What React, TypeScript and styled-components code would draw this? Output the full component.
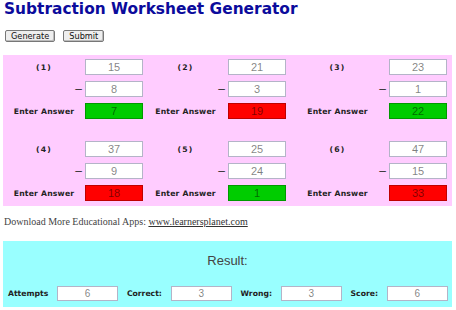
import styled, { createGlobalStyle } from 'styled-components'

const GlobalStyle = createGlobalStyle`
  body {
    margin: 0;
    background: #ffffff;
    font-family: "DejaVu Sans", Verdana, sans-serif;
  }
`

const Page = styled.div`
  width: 456px;
  height: 310px;
  overflow: hidden;
`

const Title = styled.h1`
  margin: 0;
  padding: 0 0 0 4px;
  font-family: "DejaVu Sans", Verdana, sans-serif;
  font-size: 15.4px;
  line-height: 19px;
  font-weight: bold;
  color: #0b0b9c;
`

const Toolbar = styled.div`
  display: flex;
  gap: 8px;
  padding: 11px 0 0 5px;
  height: 12px;
`

const Button = styled.button`
  height: 12px;
  padding: 0 5px;
  font-family: "DejaVu Sans", Verdana, sans-serif;
  font-size: 8.2px;
  line-height: 10px;
  color: #111;
  background: #eeeeee;
  border: 1px solid #777;
  border-radius: 2px;
  box-shadow: inset -1px -1px 0 #bbb;
`

const Worksheet = styled.div`
  margin: 13px 4px 0 3px;
  padding: 4px 0 5px 0;
  background: #ffccff;
  display: flex;
  flex-direction: column;
  gap: 22px;
`

const ProblemRow = styled.div`
  display: grid;
  grid-template-columns: 140px 143px 161px;
`

const Problem = styled.div`
  display: grid;
  grid-template-columns: 1fr 58px;
  grid-auto-rows: 16px;
  row-gap: 6px;
  align-items: center;
`

const Label = styled.span<{ $align?: string }>`
  font-size: 7.7px;
  font-weight: bold;
  color: #222;
  text-align: ${(p) => p.$align ?? 'center'};
  letter-spacing: ${(p) => (p.$align ? '0' : '0.2px')};
`

const Number = styled.span`
  font-size: 7.7px;
  font-weight: bold;
  color: #222;
  text-align: center;
  letter-spacing: 1.2px;
`

const Minus = styled.span`
  text-align: right;
  padding-right: 3px;
  font-family: "Liberation Sans", Arial, sans-serif;
  font-size: 12px;
  color: #333;
`

const Box = styled.div<{ $bg?: string }>`
  box-sizing: border-box;
  height: 16px;
  border: 1px solid ${(p) => (p.$bg ? 'rgba(0,0,0,0.25)' : '#b4b4c8')};
  background: ${(p) => p.$bg ?? '#ffffff'};
  font-family: "Liberation Sans", Arial, sans-serif;
  font-size: 11px;
  line-height: 14px;
  text-align: center;
  color: rgba(0, 0, 0, 0.5);
`

const Footer = styled.p`
  margin: 0;
  padding: 10px 0 0 4px;
  height: 25px;
  box-sizing: border-box;
  font-family: "Liberation Serif", "Times New Roman", serif;
  font-size: 10px;
  color: #444;

  a {
    color: #333;
    text-decoration: underline;
  }
`

const Results = styled.div`
  margin: 10px 4px 0 3px;
  height: 66px;
  box-sizing: border-box;
  padding: 12px 0 0 5px;
  background: #99ffff;
`

const ResultTitle = styled.div`
  text-align: center;
  font-family: "Liberation Sans", Arial, sans-serif;
  font-size: 13px;
  color: #444;
  line-height: 16px;
  padding-right: 5px;
`

const Scores = styled.div`
  display: flex;
  align-items: center;
  gap: 8.8px;
  margin-top: 17px;
`

const ScoreBox = styled(Box)`
  width: 61px;
  height: 15px;
  line-height: 13px;
  font-size: 10px;
`

type Item = { a: number; b: number; answer: number; ok: boolean }

const problems: Item[] = [
  { a: 15, b: 8, answer: 7, ok: true },
  { a: 21, b: 3, answer: 19, ok: false },
  { a: 23, b: 1, answer: 22, ok: true },
  { a: 37, b: 9, answer: 18, ok: false },
  { a: 25, b: 24, answer: 1, ok: true },
  { a: 47, b: 15, answer: 33, ok: false },
]

function ProblemCell({ n, item }: { n: number; item: Item }) {
  return (
    <Problem>
      <Number>({n})</Number>
      <Box>{item.a}</Box>
      <Minus>–</Minus>
      <Box>{item.b}</Box>
      <Label>Enter Answer</Label>
      <Box $bg={item.ok ? '#00cc00' : '#ff0000'}>{item.answer}</Box>
    </Problem>
  )
}

export default function App() {
  const rows = [problems.slice(0, 3), problems.slice(3, 6)]
  return (
    <Page>
      <GlobalStyle />
      <Title>Subtraction Worksheet Generator</Title>
      <Toolbar>
        <Button>Generate</Button>
        <Button>Submit</Button>
      </Toolbar>
      <Worksheet>
        {rows.map((row, r) => (
          <ProblemRow key={r}>
            {row.map((item, i) => (
              <ProblemCell key={i} n={r * 3 + i + 1} item={item} />
            ))}
          </ProblemRow>
        ))}
      </Worksheet>
      <Footer>
        Download More Educational Apps: <a href="#">www.learnersplanet.com</a>
      </Footer>
      <Results>
        <ResultTitle>Result:</ResultTitle>
        <Scores>
          <Label $align="left">Attempts</Label>
          <ScoreBox>6</ScoreBox>
          <Label $align="left">Correct:</Label>
          <ScoreBox>3</ScoreBox>
          <Label $align="left">Wrong:</Label>
          <ScoreBox>3</ScoreBox>
          <Label $align="left">Score:</Label>
          <ScoreBox>6</ScoreBox>
        </Scores>
      </Results>
    </Page>
  )
}
